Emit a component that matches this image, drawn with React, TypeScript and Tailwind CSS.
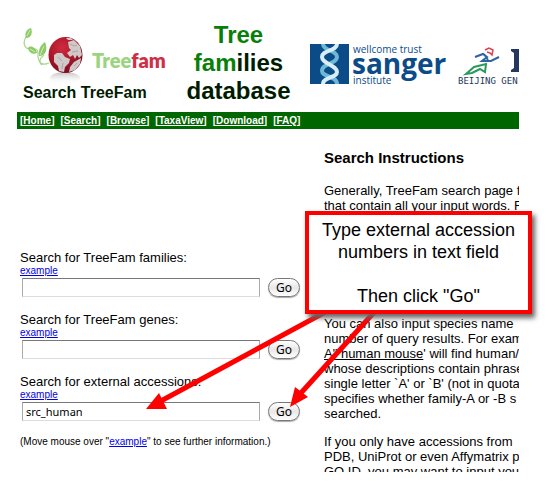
import type { ReactNode } from 'react';

const navItems = ['Home', 'Search', 'Browse', 'TaxaView', 'Download', 'FAQ'];

function TreefamLogo() {
  return (
    <svg width="148" height="58" viewBox="20 25 148 58" role="img" aria-label="Treefam">
      <defs>
        <radialGradient id="globe" cx="0.4" cy="0.3" r="0.7">
          <stop offset="0" stopColor="#cf2c40" />
          <stop offset="0.5" stopColor="#b0182c" />
          <stop offset="1" stopColor="#7c0c1c" />
        </radialGradient>
        <linearGradient id="reflection" x1="0" y1="0" x2="0" y2="1">
          <stop offset="0" stopColor="#a9a2a3" stopOpacity="0.7" />
          <stop offset="1" stopColor="#ffffff" stopOpacity="0" />
        </linearGradient>
      </defs>
      <ellipse cx="65" cy="78" rx="15" ry="6" fill="url(#reflection)" />
      <g fill="none" stroke="#a5d48a" strokeWidth="1.2">
        <path d="M26 37C22 44 25 50 32 49C39 48 38 52 38 57C39 63 42 66 49 63" />
        <path d="M44 55C40 58 38 62 42 65" />
      </g>
      <g fill="#8ccb68">
        <path d="M26 38C24 33 27 29 31 28C33 33 31 38 26 38Z" />
        <path d="M28 48C30 45 36 47 37 53C33 55 29 53 28 48Z" />
        <path d="M39 56C38 48 42 44 45 42C48 49 46 56 39 56Z" />
      </g>
      <path d="M27 36L30 30M30 49L35 52M40 55L44 46" stroke="#dff3cf" strokeWidth="0.8" />
      <ellipse cx="65.500" cy="55" rx="17" ry="18" fill="url(#globe)" />
      <g fill="#cfc9c9">
        <path d="M54 55L57 53L62 53L65 57L70 59L69 63L65 67L64 72L59 71L58 66L54 62Z" />
        <path d="M68 42L74 40L80 46L82 55L79 58L77 55L75 59L73 55L70 57L67 53L71 50L69 48Z" />
        <path d="M74 62L81 58L80 64L75 70L69 72L70 67Z" />
        <path d="M66 38L71 38L73 40L68 40Z" />
      </g>
      <path d="M70 44L74 46L77 45M72 52L78 51M58 57L62 61M63 63L62 69M74 66L77 63" stroke="#b79fa2" fill="none" />
      <text x="92" y="68" className="font-['Lato'] text-[20px] font-extrabold" fill="#9bd480">
        Tree<tspan fill="#cf3048">fam</tspan>
      </text>
    </svg>
  );
}

function SangerLogo() {
  return (
    <svg width="140" height="44" viewBox="308 42 140 44" role="img" aria-label="wellcome trust sanger institute">
      <rect x="310" y="44" width="39" height="40" fill="#0b4c88" />
      <g fill="none" strokeWidth="4">
        <path d="M323 44C323 51 337 50 337 57C337 64 322 63 322 71C322 77 337 76 337 84" stroke="#6db8d4" />
        <path d="M337 44C337 51 322 50 322 57C322 64 337 65 337 72C337 78 323 77 323 84" stroke="#d8edf6" />
      </g>
      <text x="353" y="53" className="font-['Open_Sans'] text-[10px]" fill="#0b4c88">wellcome trust</text>
      <text x="352" y="74" className="font-['Open_Sans'] text-[28px] font-bold" fill="#0b4c88">sanger</text>
      <text x="353" y="84" className="font-['Open_Sans'] text-[10px]" fill="#0b4c88">institute</text>
    </svg>
  );
}

function BeijingLogo() {
  return (
    <svg width="62" height="44" viewBox="457 42 62 44" role="img" aria-label="Beijing Genomics Institute">
      <path d="M485 50L489 48L493 50L492 55L490 53L487 52" fill="none" stroke="#d74450" strokeWidth="1.500" />
      <path d="M475 57L483 54L487 57L482 61L491 61L499 57M484 54L488 60" fill="none" stroke="#2e65a0" strokeWidth="2" />
      <path d="M466 74L474 67L486 64L485 72L480 69L472 73Z" fill="none" stroke="#2a9a5c" strokeWidth="2" />
      <path d="M511 49H519V72H511V70L514 68V53L511 51Z" fill="#26375c" />
      <text x="458" y="84" className="font-['DejaVu_Sans_Mono'] text-[9px]" fill="#26375c">BEIJING GEN</text>
    </svg>
  );
}

function SearchField({ id, label, value = '' }: { id: string; label: string; value?: string }) {
  return (
    <form className="h-[62px]" onSubmit={(e) => e.preventDefault()}>
      <label htmlFor={id} className="block h-[15px] text-[13px] leading-[15px]">{label}</label>
      <a href="#example" className="block h-3 text-[10px] leading-3 text-[#0000ee] underline">example</a>
      <div className="mt-px flex items-center gap-2 pl-0.5">
        <input
          id={id}
          type="text"
          defaultValue={value}
          className="h-[19px] w-[238px] border border-t-[#777] border-r-[#aaa] border-b-[#ddd] border-l-[#aaa] bg-white px-[3px] font-['Noto_Sans',sans-serif] text-[11px] leading-4 outline-none"
        />
        <button
          type="submit"
          className="h-[19px] w-8 rounded-full border border-[#777] bg-linear-to-b from-white via-[#e8e8e8] to-white font-['Noto_Sans',sans-serif] text-[12px] leading-4 shadow-[0_1px_1px_#aaa]"
        >
          Go
        </button>
      </div>
    </form>
  );
}

function Paragraph({ children }: { children: ReactNode }) {
  return <p className="mb-[13px]">{children}</p>;
}

export default function App() {
  return (
    <div className="relative bg-white font-['Liberation_Sans',Arial,sans-serif] text-black">
      <div className="mr-8 ml-[17px] h-[472px] overflow-hidden">
        <header className="flex h-28 overflow-hidden pt-[21px] pl-[3px] text-[#001c00]">
          <div className="w-[153px] shrink-0 pt-1">
            <TreefamLogo />
            <h1 className="pl-[3px] text-[16px] leading-5 font-bold">Search TreeFam</h1>
          </div>
          <h2 className="w-[131px] shrink-0 text-center text-[24px] leading-7 font-bold">
            <span className="text-[#088008]">Tree</span>
            <br />
            <span className="text-[#088008]">fam</span>ilies
            <br />
            database
          </h2>
          <div className="flex shrink-0 gap-[9px] pt-[21px] pl-1">
            <SangerLogo />
            <BeijingLogo />
          </div>
        </header>

        <nav className="flex h-[17px] items-center gap-1.5 bg-[#006600] pl-[3px] text-[10px] leading-3 font-bold text-white">
          {navItems.map((item) => (
            <a key={item} href={`#${item}`} className="underline">[{item}]</a>
          ))}
        </nav>

        <main className="flex">
          <section className="w-[304px] shrink-0 pt-[121px] pl-[3px]">
            <SearchField id="families" label="Search for TreeFam families:" />
            <SearchField id="genes" label="Search for TreeFam genes:" />
            <SearchField id="external" label="Search for external accessions:" value="src_human" />
            <p className="text-[10px] leading-3">
              (Move mouse over "<a href="#example" className="text-[#0000ee] underline">example</a>" to see further information.)
            </p>
          </section>
          <section className="min-w-0 flex-1 overflow-hidden pt-5 pl-[3px] text-[13px] leading-[15px] whitespace-nowrap">
            <h3 className="mb-4 text-[15px] leading-[18px] font-bold">Search Instructions</h3>
            <div className="h-[133px]">
              Generally, TreeFam search page f
              <br />
              that contain all your input words. F
            </div>
            <Paragraph>
              You can also input species name
              <br />
              number of query results. For exam
              <br />
              <u>A" human mouse</u>' will find human/
              <br />
              whose descriptions contain phrase
              <br />
              single letter `A' or `B' (not in quota
              <br />
              specifies whether family-A or -B s
              <br />
              searched.
            </Paragraph>
            <Paragraph>
              If you only have accessions from
              <br />
              PDB, UniProt or even Affymatrix p
              <br />
              GO ID, you may want to input you
            </Paragraph>
          </section>
        </main>
      </div>

      <svg className="pointer-events-none absolute top-0 left-0" width="551" height="483" viewBox="0 0 551 483" aria-hidden="true">
        <g stroke="#ff0000" strokeWidth="5" fill="#ff0000">
          <path d="M331 309L159 402M378 308L300 394" />
          <path d="M146 409L159 393L167 409ZM290 407L295 387L308 397Z" stroke="none" />
        </g>
      </svg>
      <aside className="absolute top-[211px] left-[305px] w-[227px] border-4 border-[#ff0000] bg-white pt-1 pb-[3px] text-center text-[18px] leading-[22px] shadow-[3px_4px_5px_#666]">
        <p>
          Type external accession
          <br />
          numbers in text field
        </p>
        <p className="pt-[22px]">Then click "Go"</p>
      </aside>
    </div>
  );
}
